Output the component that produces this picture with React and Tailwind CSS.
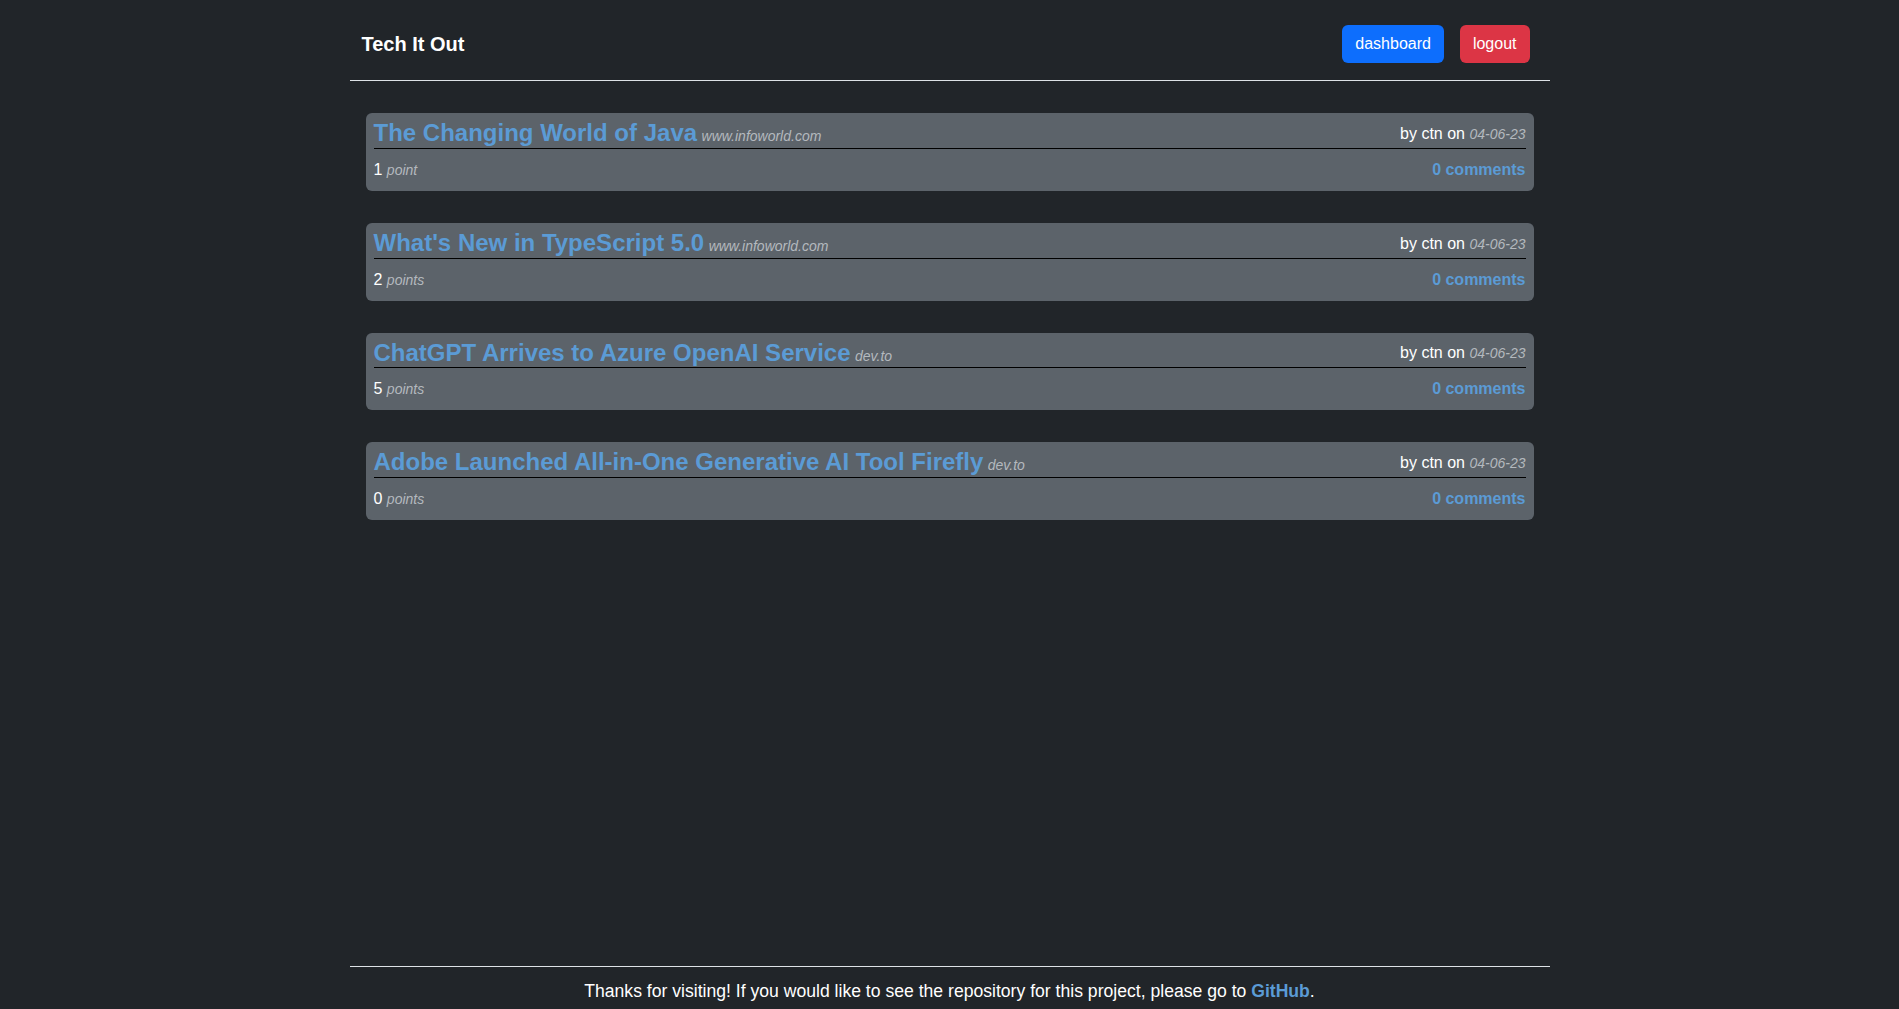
const posts = [
  { title: "The Changing World of Java", site: "www.infoworld.com", points: 1 },
  { title: "What's New in TypeScript 5.0", site: "www.infoworld.com", points: 2 },
  { title: "ChatGPT Arrives to Azure OpenAI Service", site: "dev.to", points: 5 },
  { title: "Adobe Launched All-in-One Generative AI Tool Firefly", site: "dev.to", points: 0 },
];

const PostCard = ({ post }) => {
  return (
    <div className="mx-4 rounded-md bg-[#5c636a] px-2">
      <div className="flex items-end justify-between border-b border-black pt-[6px]">
        <div className="leading-[1.2]">
          <a href="#" className="text-[24px] font-bold text-[#5b9bd5]">
            {post.title}
          </a>{" "}
          <em className="text-[14px] text-[#b4b9be]">{post.site}</em>
        </div>
        <div className="pb-[2px] text-[16px] leading-6 text-white">
          by ctn on <em className="text-[14px] text-[#b4b9be]">04-06-23</em>
        </div>
      </div>
      <div className="flex items-center justify-between pt-[9px] pb-[9px] leading-6">
        <div className="text-[16px] text-white">
          {post.points}{" "}
          <em className="text-[14px] text-[#b4b9be]">
            {post.points === 1 ? "point" : "points"}
          </em>
        </div>
        <a href="#" className="text-[16px] font-bold text-[#5b9bd5]">
          0 comments
        </a>
      </div>
    </div>
  );
};

const App = () => {
  return (
    <div className="flex min-h-screen flex-col bg-[#212529] font-['Liberation_Sans',Arial,sans-serif] text-white">
      <div className="mx-auto flex w-[1200px] flex-1 flex-col">
        <header className="flex items-center justify-between border-b border-[#dee2e6] pt-[25px] pb-[17px] pl-3 pr-5">
          <span className="text-[20px] font-bold">Tech It Out</span>
          <div className="flex gap-4">
            <button className="h-[38px] rounded-md bg-[#0d6efd] px-[13px] text-[16px] text-white">
              dashboard
            </button>
            <button className="h-[38px] rounded-md bg-[#dc3545] px-[13px] text-[16px] text-white">
              logout
            </button>
          </div>
        </header>

        <main className="flex flex-1 flex-col gap-8 pt-8">
          {posts.map((post) => (
            <PostCard key={post.title} post={post} />
          ))}
        </main>

        <footer className="border-t border-[#dee2e6] pt-[11px] pb-[5px] text-center text-[17.6px] leading-[26px]">
          Thanks for visiting! If you would like to see the repository for this project, please go to{" "}
          <a href="#" className="font-bold text-[#5b9bd5]">
            GitHub
          </a>
          .
        </footer>
      </div>
    </div>
  );
};

export default App;
